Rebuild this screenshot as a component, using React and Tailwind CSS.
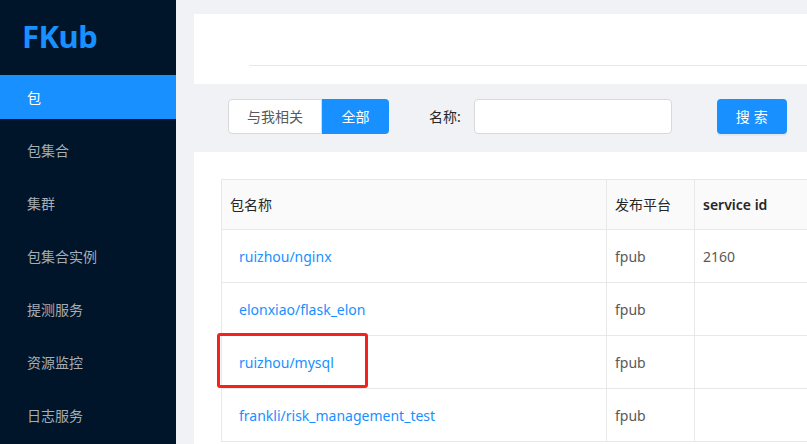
import { useState } from 'react'

const menu = ['包', '包集合', '集群', '包集合实例', '提测服务', '资源监控', '日志服务']

const rows = [
  { name: 'ruizhou/nginx', platform: 'fpub', sid: '2160' },
  { name: 'elonxiao/flask_elon', platform: 'fpub', sid: '' },
  { name: 'ruizhou/mysql', platform: 'fpub', sid: '' },
  { name: 'frankli/risk_management_test', platform: 'fpub', sid: '' },
]

const cjk = { fontFamily: '"Noto Sans", "Noto Sans CJK SC", sans-serif' }

export default function App() {
  const [scope, setScope] = useState('all')
  const [name, setName] = useState('')

  return (
    <div className="flex w-full h-[444px] overflow-hidden bg-[#f0f2f5]" style={cjk}>
      <aside className="w-[176px] shrink-0 bg-[#001529] flex flex-col">
        <div className="h-[75px] flex items-center pl-[22px] pb-[2px]">
          <span className="text-[31px] font-bold text-[#1890ff] tracking-[-0.5px]">FKub</span>
        </div>
        <nav className="flex flex-col gap-[9px]">
          {menu.map((m, i) => (
            <div
              key={m}
              className={
                'h-[44px] flex items-center pl-[27px] text-[14px] ' +
                (i === 0 ? 'bg-[#1890ff] text-white' : 'text-[#a6adb4]')
              }
            >
              {m}
            </div>
          ))}
        </nav>
      </aside>

      <main className="flex-1 min-w-0 overflow-hidden pl-[18px] pt-[14px]">
        <div className="w-[900px]">
          <div className="h-[70px] bg-white pt-[51px] pl-[55px]">
            <div className="border-b border-[#e8e8e8]" />
          </div>

          <div className="flex items-center h-[35px] mt-[15px] ml-[34px]">
            <div className="flex h-[35px] text-[14px]">
              <button
                onClick={() => setScope('mine')}
                className="w-[94px] h-full border border-[#d9d9d9] rounded-l-[4px] bg-white text-[#595959]"
              >
                与我相关
              </button>
              <button
                onClick={() => setScope('all')}
                className="w-[67px] h-full rounded-r-[4px] bg-[#1890ff] text-white"
              >
                全部
              </button>
            </div>
            <label className="ml-[40px] text-[14px] text-[#262626]">名称:</label>
            <input
              value={name}
              onChange={(e) => setName(e.target.value)}
              className="ml-[13px] w-[198px] h-[35px] border border-[#d9d9d9] rounded-[4px] bg-white px-3 outline-none"
            />
            <button className="ml-[45px] w-[70px] h-[35px] rounded-[4px] bg-[#1890ff] text-white text-[14px] shadow-[0_2px_0_rgba(0,0,0,0.045)] tracking-[4px] pl-[4px]">
              搜索
            </button>
          </div>

          <div className="relative bg-white mt-[18px] pt-[27px] pl-[27px] h-[400px]">
            <table className="border-collapse text-[14px] w-[700px]">
              <thead>
                <tr className="h-[50px] bg-[#fafafa] text-[#262626]">
                  <th className="w-[385px] border border-[#e8e8e8] text-left font-normal pl-[8px]">包名称</th>
                  <th className="w-[88px] border border-[#e8e8e8] text-left font-normal pl-[8px]">发布平台</th>
                  <th className="border border-[#e8e8e8] text-left font-semibold pl-[8px]">service id</th>
                </tr>
              </thead>
              <tbody>
                {rows.map((r) => (
                  <tr key={r.name} className="h-[53px] text-[#595959]">
                    <td className="border border-[#e8e8e8] pl-[17px]">
                      <a className="text-[#1890ff] cursor-pointer">{r.name}</a>
                    </td>
                    <td className="border border-[#e8e8e8] pl-[8px]">{r.platform}</td>
                    <td className="border border-[#e8e8e8] pl-[8px]">{r.sid}</td>
                  </tr>
                ))}
              </tbody>
            </table>
            <div className="absolute left-[23px] top-[181px] w-[151px] h-[55px] border-[3px] border-[#f5221b] rounded-[3px]" />
          </div>
        </div>
      </main>
    </div>
  )
}
